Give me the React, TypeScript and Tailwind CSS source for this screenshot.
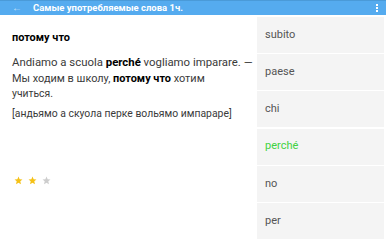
import React, { useLayoutEffect, useRef } from "react";

function Fit({
  w,
  className,
  children,
}: {
  w: number;
  className?: string;
  children: React.ReactNode;
}) {
  const ref = useRef<HTMLSpanElement>(null);
  useLayoutEffect(() => {
    const el = ref.current;
    if (!el) return;
    const fit = () => {
      el.style.fontSize = "20px";
      const width = el.getBoundingClientRect().width;
      if (width > 0) el.style.fontSize = `${(20 * w) / width}px`;
    };
    fit();
    const timers = [30, 120, 300, 700].map((t) => window.setTimeout(fit, t));
    if (document.fonts) document.fonts.ready.then(fit);
    return () => timers.forEach((t) => window.clearTimeout(t));
  }, [w]);
  return (
    <span ref={ref} className={"inline-block whitespace-nowrap " + (className || "")}>
      {children}
    </span>
  );
}

const Star = ({ color }: { color: string }) => (
  <svg width="9" height="9" viewBox="0 0 24 24">
    <path
      d="M12 1.5l3 7.2 7.6.6-5.8 5 1.8 7.6L12 17.8l-6.6 4.1 1.8-7.6-5.8-5 7.6-.6z"
      fill={color}
    />
  </svg>
);

export default function App() {
  const words = ["subito", "paese", "chi", "perché", "no", "per"];
  return (
    <div
      className="w-[386px] h-[241px] overflow-hidden bg-white flex flex-col"
      style={{ fontFamily: "Roboto, 'Noto Sans', sans-serif" }}
    >
      <div className="h-[15px] shrink-0 bg-[#55abef] border-t border-[#4a9ad8] flex items-center text-white">
        <span className="w-[33px] shrink-0 text-[10px] pl-[12px] leading-none text-white/70">←</span>
        <div className="flex-1 h-[14px] leading-[14px]">
          <Fit w={150} className="font-bold leading-[14px] align-top">
            Самые употребляемые слова 1ч.
          </Fit>
        </div>
        <div className="w-[14px] flex flex-col items-center gap-[1px] mr-[2px]">
          <div className="w-[2px] h-[2px] bg-white" />
          <div className="w-[2px] h-[2px] bg-white" />
          <div className="w-[2px] h-[2px] bg-white" />
        </div>
      </div>
      <div className="flex flex-1 min-h-0">
        <div className="w-[257px] shrink-0 pl-[12px] pr-[2px] pt-[16px] text-[#3a3a3a] overflow-hidden">
          <div className="h-[14px] leading-[14px]">
            <Fit w={58} className="font-bold text-black leading-[14px] align-top">
              потому что
            </Fit>
          </div>
          <div className="mt-[10px]">
            <div className="h-[15.5px] leading-[15.5px]">
              <Fit w={241} className="leading-[15.5px] align-top">
                Andiamo a scuola <b className="text-black">perché</b> vogliamo imparare. —
              </Fit>
            </div>
            <div className="h-[15.5px] leading-[15.5px]">
              <Fit w={193} className="leading-[15.5px] align-top">
                Мы ходим в школу, <b className="text-black">потому что</b> хотим
              </Fit>
            </div>
            <div className="h-[15.5px] leading-[15.5px]">
              <Fit w={41} className="leading-[15.5px] align-top">
                учиться.
              </Fit>
            </div>
          </div>
          <div className="h-[15.5px] leading-[15.5px] mt-[4.5px]">
            <Fit w={220} className="leading-[15.5px] align-top">
              [андьямо а скуола перке вольямо импараре]
            </Fit>
          </div>
          <div className="flex gap-[5px] mt-[54px] pl-[1.5px]">
            <Star color="#f5c116" />
            <Star color="#f5c116" />
            <Star color="#cdcdcd" />
          </div>
        </div>
        <div className="flex-1 mr-[2px] flex flex-col gap-[1.2px] pt-[2px]">
          {words.map((w) => (
            <div
              key={w}
              className={
                "h-[36px] shrink-0 bg-[#f4f4f4] flex items-center pl-[8px] text-[11px] " +
                (w === "perché" ? "text-[#3fd23f]" : "text-[#555]")
              }
            >
              {w}
            </div>
          ))}
        </div>
      </div>
    </div>
  );
}
